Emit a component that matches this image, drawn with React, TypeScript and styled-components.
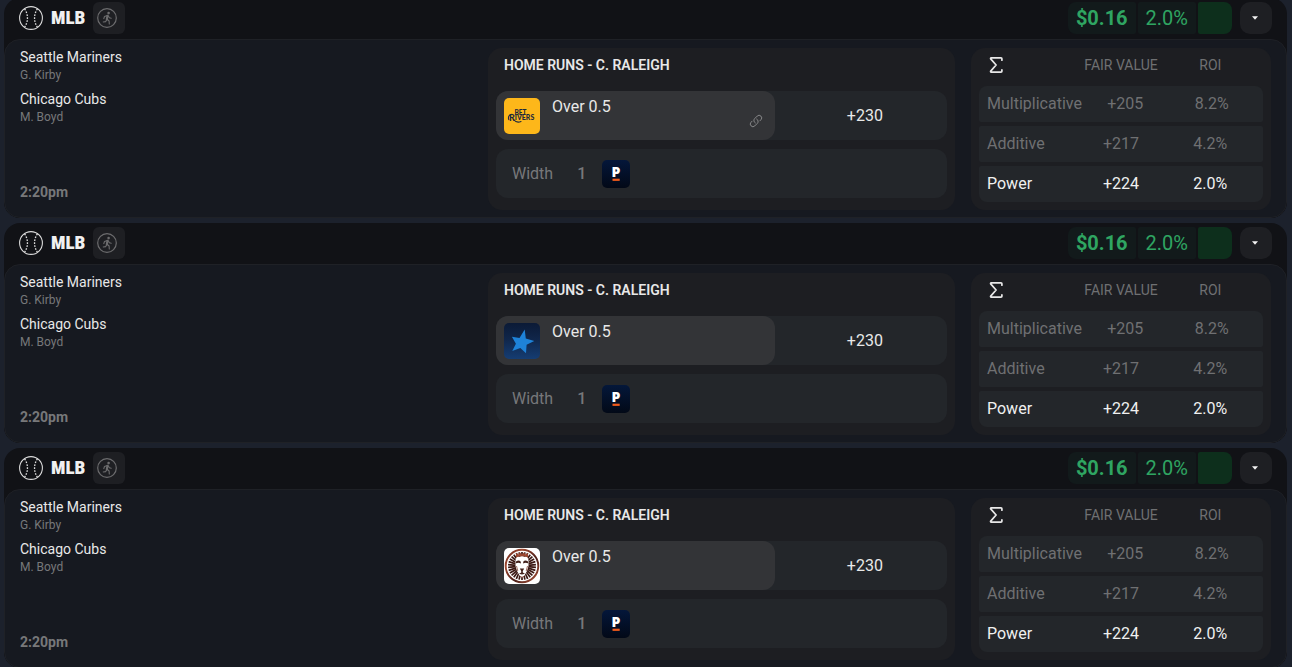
import React from "react";
import styled, { createGlobalStyle } from "styled-components";
import { HiOutlineLink } from "react-icons/hi2";

const GlobalStyle = createGlobalStyle`
  *, *::before, *::after { box-sizing: border-box; }
  html { scrollbar-width: none; }
  body {
    margin: 0;
    background: #1c212c;
    color: #e8e8e8;
    font-family: Roboto, "Liberation Sans", sans-serif;
    font-size: 16px;
    line-height: 20px;
  }
`;

const List = styled.main`
  display: flex;
  flex-direction: column;
  gap: 5px;
  margin-top: -2px;
  padding: 0 5px 0 4px;
`;

const Card = styled.article`
  background: #111216;
  border-radius: 16px;
  overflow: hidden;
`;

const Header = styled.header`
  display: flex;
  align-items: center;
  justify-content: space-between;
  padding: 4px 15px 5px 15px;
`;

const Group = styled.div`
  display: flex;
  align-items: center;
  gap: 8px;
`;

const League = styled.h2`
  margin: 0;
  font-family: "Roboto Condensed", Roboto, sans-serif;
  font-size: 19px;
  line-height: 32px;
  font-weight: 900;
  color: #f0f0f0;
`;

const IconButton = styled.button<{ $radius: number }>`
  display: grid;
  place-items: center;
  width: 32px;
  height: 32px;
  padding: 0 2px 0 0;
  border: 0;
  border-radius: ${(p) => p.$radius}px;
  background: #1e1f23;
  color: #6c6c6e;
`;

const Chips = styled.div`
  display: flex;
  gap: 2px;
  border-radius: 8px;
  overflow: hidden;
`;

const Chip = styled.span<{ $strong?: boolean }>`
  height: 32px;
  padding: 0 8px;
  border-radius: 2px;
  background: #121a1b;
  color: #2fa562;
  font-size: 20px;
  line-height: 32px;
  font-weight: ${(p) => (p.$strong ? 700 : 400)};
`;

const Swatch = styled.span`
  width: 34px;
  border-radius: 2px;
  background: #0d2f1c;
`;

const Body = styled.div`
  display: grid;
  grid-template-columns: minmax(0, 1fr) minmax(0, 1fr) 300px;
  gap: 16px;
  padding: 8px 15px 7px 0;
  border: 1px solid #1f2126;
  border-radius: 16px;
  background: #161920;
`;

const Game = styled.section`
  display: flex;
  flex-direction: column;
  padding: 0 15px;
`;

const Team = styled.h3`
  margin: 0;
  font-size: 14px;
  line-height: 18px;
  font-weight: 400;
`;

const Pitcher = styled.p`
  margin: 0 0 6px;
  font-size: 12px;
  line-height: 18px;
  color: #77787a;
`;

const StartTime = styled.time`
  margin-top: auto;
  padding-bottom: 8px;
  font-size: 14px;
  line-height: 20px;
  font-weight: 700;
  color: #77787a;
`;

const Panel = styled.section`
  padding: 0 8px 8px;
  border-radius: 14px;
  background: #1d1e22;
`;

const PanelTitle = styled.h4`
  margin: 0;
  padding: 7px 8px 16px;
  font-size: 14px;
  line-height: 20px;
  font-weight: 600;
  text-transform: uppercase;
`;

const Line = styled.div`
  display: flex;
  height: 49px;
  border-radius: 12px;
  background: #23262a;
  & + & { margin-top: 9px; }
`;

const Pick = styled.div`
  display: flex;
  flex: 8 1 0;
  gap: 12px;
  padding: 7px 8px;
  border-radius: 12px;
  background: #333437;
`;

const PickName = styled.span`
  flex: 1;
  line-height: 18px;
`;

const BetLink = styled.a`
  align-self: flex-end;
  display: flex;
  padding: 0 4px 5px 0;
  color: #929294;
`;

const Odds = styled.span`
  flex: 5 1 0;
  padding-left: 8px;
  line-height: 50px;
  text-align: center;
`;

const WidthLine = styled(Line)`
  align-items: center;
  padding: 0 16px;
  color: #77787a;
`;

const WidthValue = styled.span`
  margin: 0 16px 0 24px;
  font-weight: 500;
`;

const Logo = styled.svg`
  display: block;
  flex: none;
`;

const FairTable = styled.table`
  display: block;
  color: #6f7072;
`;

const TableHead = styled.thead`
  display: block;
`;

const HeadRow = styled.tr`
  display: flex;
  align-items: center;
  height: 38px;
  padding: 0 8px 4px;
`;

const Th = styled.th`
  flex: 1;
  padding: 0;
  font-size: 14px;
  line-height: 20px;
  font-weight: 400;
  text-align: center;
  white-space: nowrap;
`;

const Rows = styled.tbody`
  display: flex;
  flex-direction: column;
  gap: 4px;
  border-radius: 8px;
  overflow: hidden;
`;

const Row = styled.tr<{ $active: boolean }>`
  display: flex;
  padding: 8px;
  border-radius: 2px;
  background: #23262a;
  color: ${(p) => (p.$active ? "#f0f0f0" : "inherit")};
`;

const Method = styled.th`
  flex: 1;
  padding: 0;
  font-weight: 400;
  text-align: left;
`;

const Td = styled.td`
  flex: 1;
  padding: 0;
  text-align: center;
`;

const Baseball = () => (
  <Logo width="24" height="24" viewBox="1 1 24 24" fill="none" stroke="#dcdcdc" aria-hidden="true">
    <circle cx="13" cy="13" r="11.4" strokeWidth="1.1" />
    <path d="M6.6 3.8C10.4 9.500 10.4 16.500 6.6 22.2M19.4 3.8c-3.800 5.700-3.800 12.700 0 18.400" strokeWidth="1.3" strokeDasharray="1.7 1.3" />
  </Logo>
);

const Runner = () => (
  <Logo width="22" height="22" viewBox="0 0 22 22" fill="none" stroke="currentColor" strokeLinecap="round" strokeLinejoin="round" aria-hidden="true">
    <circle cx="10" cy="11" r="9.3" strokeWidth="1.2" />
    <circle cx="11.600" cy="6.1" r="1.3" fill="currentColor" stroke="none" />
    <path d="M10.500 8.700l-.7 3.800" strokeWidth="2.1" />
    <path d="M10.300 8.400L7.500 9.500l-.7 2.100M11.200 8.800l1.200 2 1.800.5M9.600 13l-1 1.600-2.400.4M10.400 12.300l1.700 1.700.2 3" strokeWidth="1.1" />
  </Logo>
);

const Sigma = () => (
  <Logo width="18" height="18" viewBox="0 0 18 18" fill="none" stroke="#e8e8e8" strokeWidth="1.7" strokeLinecap="round" strokeLinejoin="round" role="img" aria-label="Method">
    <path d="M14.900 4.2V2.800a.9.900 0 0 0-.9-.9H4.100c-.5 0-.7.600-.4 1L9.100 9l-5.400 6.100c-.3.400-.1 1 .4 1h9.900c.5 0 .9-.4.900-.9v-1.400" />
  </Logo>
);

const BetRivers = () => (
  <Logo width="36" height="36" viewBox="0 0 36 36" role="img" aria-label="BetRivers">
    <rect width="36" height="36" rx="5" fill="#fdb71a" />
    <g fill="#1f2a3c" fontFamily="Lato, sans-serif" fontWeight="900">
      <text x="16.500" y="16.800" fontSize="6.500" textAnchor="middle">BET</text>
      <text x="5" y="22.800" fontSize="9">R</text>
      <text x="10.800" y="22.400" fontSize="7">IVERS</text>
    </g>
    <path d="M4.800 21.600c-1-2.500.3-5.300 3.200-5.400M9.500 21.500c2 2.600 4.500 3.300 7.500 2" fill="none" stroke="#1f2a3c" strokeWidth="1.1" strokeLinecap="round" />
  </Logo>
);

const BlueStar = () => (
  <Logo width="36" height="36" viewBox="0 0 36 36" role="img" aria-label="Star sportsbook">
    <defs>
      <linearGradient id="starSky" x1="0" y1="0" x2="0" y2="1">
        <stop offset="0" stopColor="#0b1a36" />
        <stop offset="0.45" stopColor="#10264a" />
        <stop offset="1" stopColor="#153d73" />
      </linearGradient>
    </defs>
    <rect width="36" height="36" rx="5" fill="url(#starSky)" />
    <path d="M20.700 6.500l1.100 9.100 8.500 2.400-7.700 3.800-.6 8.400-5.700-5.200-8 3 3.600-7.300-4-7 7.600 1.400z" fill="#1e82d8" />
  </Logo>
);

const RAYS = Array.from({ length: 30 }, (_, i) => i * 12);

const Lion = () => (
  <Logo width="36" height="36" viewBox="0 0 36 36" role="img" aria-label="Lion sportsbook">
    <defs>
      <linearGradient id="lionBronze" x1="0" y1="0" x2="1" y2="1">
        <stop offset="0" stopColor="#5a1f17" />
        <stop offset="0.25" stopColor="#a04a32" />
        <stop offset="0.6" stopColor="#4a1d17" />
        <stop offset="1" stopColor="#b0563c" />
      </linearGradient>
    </defs>
    <rect width="36" height="36" rx="5" fill="#fff" />
    <circle cx="18" cy="18" r="16.300" fill="none" stroke="url(#lionBronze)" strokeWidth="1.900" />
    <g stroke="#3a1712" strokeWidth="1.700">
      {RAYS.map((a) => (
        <line key={a} x1="18" y1="4" x2="18" y2="12" transform={`rotate(${a} 18 18)`} />
      ))}
    </g>
    <path d="M11.500 12l1.500-4 2 1 3-1 3 1 2-1 1.500 4v6l-1.500 5-2.500 4.500-2.500 2-2.500-2-2.500-4.500-1.500-5z" fill="#fff" />
    <path d="M12 9.500V5l2.500 1.500L16 4.500l2 1.800 2-1.800 1.500 2L24 5v4.500c-3.500-1.600-8.500-1.600-12 0z" fill="#9a4630" />
    <path d="M12 13.500c2-1.300 3.500-1.200 4.800.2v1.800c-1.600-.9-3-1-4.800-.2zM24 13.500c-2-1.300-3.500-1.200-4.800.2v1.800c1.600-.9 3-1 4.800-.2zM15.800 20.500h4.400L18.800 23v1.500l2.200 1.200-3 .9-3-.9 2.200-1.200V23z" fill="#42201a" />
    <path d="M12.500 18l1.300 5M23.500 18l-1.300 5M16 28.300l2 1 2-1" fill="none" stroke="#8a4a3a" strokeWidth=".8" />
  </Logo>
);

const Pinnacle = () => (
  <Logo width="28" height="28" viewBox="0 0 28 28" role="img" aria-label="Pinnacle">
    <defs>
      <linearGradient id="navy" x1="0" y1="0" x2="0" y2="1">
        <stop offset="0" stopColor="#04173a" />
        <stop offset="1" stopColor="#020917" />
      </linearGradient>
    </defs>
    <rect width="28" height="28" rx="5" fill="url(#navy)" />
    <text x="14" y="16.500" fontFamily="Open Sans, sans-serif" fontWeight="800" fontSize="14" fill="#fff" textAnchor="middle">P</text>
    <rect x="10.500" y="18.700" width="7.200" height="2.200" fill="#f05a1a" />
  </Logo>
);

type Bet = { id: string; logo: React.ReactNode; link?: boolean };

const BETS: Bet[] = [
  { id: "rivers", logo: <BetRivers />, link: true },
  { id: "star", logo: <BlueStar /> },
  { id: "lion", logo: <Lion /> },
];

const METHODS = [
  { name: "Multiplicative", value: "+205", roi: "8.2%" },
  { name: "Additive", value: "+217", roi: "4.2%" },
  { name: "Power", value: "+224", roi: "2.0%", active: true },
];

const BetCard = ({ bet }: { bet: Bet }) => (
  <Card>
    <Header>
      <Group>
        <Baseball />
        <League>MLB</League>
        <IconButton type="button" $radius={6} aria-label="Player prop">
          <Runner />
        </IconButton>
      </Group>
      <Group>
        <Chips>
          <Chip $strong>$0.16</Chip>
          <Chip>2.0%</Chip>
          <Swatch />
        </Chips>
        <IconButton type="button" $radius={10} aria-label="More options">
          <Logo width="8" height="4" viewBox="0 0 8 4" aria-hidden="true">
            <path d="M1 .2h6L4 3.700z" fill="#f4f4f4" />
          </Logo>
        </IconButton>
      </Group>
    </Header>
    <Body>
      <Game>
        <Team>Seattle Mariners</Team>
        <Pitcher>G. Kirby</Pitcher>
        <Team>Chicago Cubs</Team>
        <Pitcher>M. Boyd</Pitcher>
        <StartTime dateTime="14:20">2:20pm</StartTime>
      </Game>
      <Panel>
        <PanelTitle>Home Runs - C. Raleigh</PanelTitle>
        <Line>
          <Pick>
            {bet.logo}
            <PickName>Over 0.5</PickName>
            {bet.link && (
              <BetLink href="#bet" aria-label="Open bet">
                <HiOutlineLink size={14} />
              </BetLink>
            )}
          </Pick>
          <Odds>+230</Odds>
        </Line>
        <WidthLine>
          Width
          <WidthValue>1</WidthValue>
          <Pinnacle />
        </WidthLine>
      </Panel>
      <Panel>
        <FairTable>
          <TableHead>
            <HeadRow>
              <Th scope="col"><Sigma /></Th>
              <Th scope="col">FAIR VALUE</Th>
              <Th scope="col">ROI</Th>
            </HeadRow>
          </TableHead>
          <Rows>
            {METHODS.map((m) => (
              <Row key={m.name} $active={!!m.active}>
                <Method scope="row">{m.name}</Method>
                <Td>{m.value}</Td>
                <Td>{m.roi}</Td>
              </Row>
            ))}
          </Rows>
        </FairTable>
      </Panel>
    </Body>
  </Card>
);

export default function App() {
  return (
    <>
      <GlobalStyle />
      <List>
        {BETS.map((bet) => (
          <BetCard key={bet.id} bet={bet} />
        ))}
      </List>
    </>
  );
}
